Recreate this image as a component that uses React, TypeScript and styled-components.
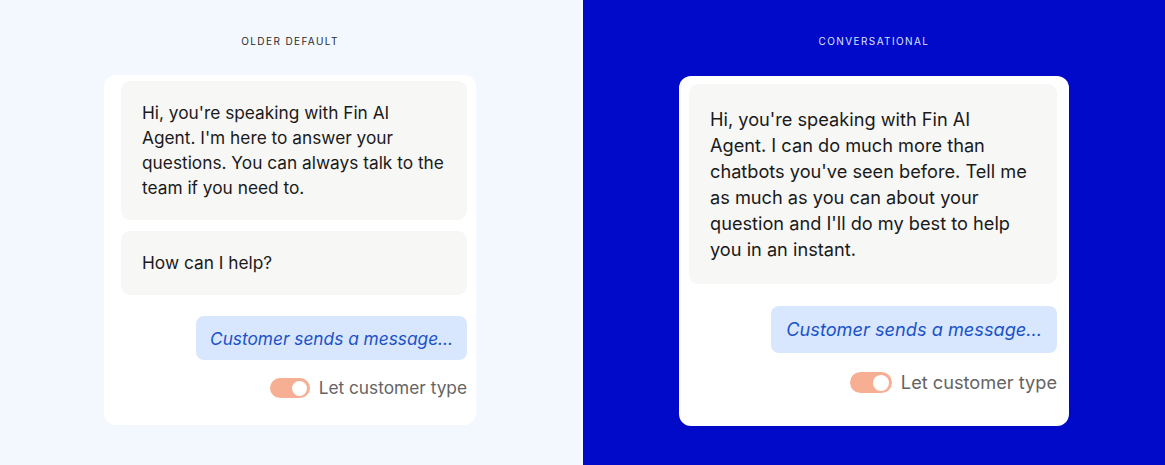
import React from 'react';
import styled, { createGlobalStyle } from 'styled-components';

const GlobalStyle = createGlobalStyle`
  html, body {
    margin: 0;
    padding: 0;
  }
  body {
    font-family: Inter, "Noto Sans", sans-serif;
    -webkit-font-smoothing: antialiased;
  }
`;

type Variant = 'light' | 'dark';

interface Sizing {
  cardWidth: number;
  cardPad: string;
  font: number;
  line: number;
  bubblePad: string;
  bubbleGap: number;
  customerPad: string;
  customerGap: number;
  toggleGap: number;
  toggleW: number;
  toggleH: number;
}

const sizes: Record<Variant, Sizing> = {
  light: {
    cardWidth: 372,
    cardPad: '6px 9px 0 17px',
    font: 17.3,
    line: 25,
    bubblePad: '19px 21px 20px',
    bubbleGap: 11,
    customerPad: '10px 14px 9px',
    customerGap: 21,
    toggleGap: 18,
    toggleW: 40,
    toggleH: 20,
  },
  dark: {
    cardWidth: 390,
    cardPad: '8px 12px 0 10px',
    font: 18.2,
    line: 26,
    bubblePad: '22px 16px 22px 21px',
    bubbleGap: 11,
    customerPad: '10px 15px 11px',
    customerGap: 22,
    toggleGap: 19,
    toggleW: 42,
    toggleH: 21,
  },
};

const Page = styled.div`
  display: grid;
  grid-template-columns: 583px 582px;
  height: 465px;
  overflow: hidden;
`;

const Panel = styled.section<{ $variant: Variant }>`
  display: flex;
  flex-direction: column;
  align-items: center;
  padding-top: 35px;
  padding-right: ${({ $variant }) => ($variant === 'dark' ? 0 : 3)}px;
  box-sizing: border-box;
  background: ${({ $variant }) => ($variant === 'dark' ? '#000ac8' : '#f3f7fe')};
`;

const PanelLabel = styled.div<{ $variant: Variant }>`
  font-size: 10px;
  line-height: 12px;
  letter-spacing: 1.4px;
  text-transform: uppercase;
  color: ${({ $variant }) => ($variant === 'dark' ? '#dfe2ff' : '#2b2b2b')};
  margin-bottom: ${({ $variant }) => ($variant === 'dark' ? 29 : 28)}px;
`;

const Card = styled.div<{ $s: Sizing }>`
  width: ${({ $s }) => $s.cardWidth}px;
  height: 350px;
  box-sizing: border-box;
  padding: ${({ $s }) => $s.cardPad};
  background: #ffffff;
  border-radius: 12px;
  display: flex;
  flex-direction: column;
  align-items: flex-end;
`;

const Thread = styled.div<{ $s: Sizing }>`
  align-self: stretch;
  display: flex;
  flex-direction: column;
  gap: ${({ $s }) => $s.bubbleGap}px;
`;

const BotBubble = styled.div<{ $s: Sizing }>`
  background: #f7f7f6;
  border-radius: 9px;
  padding: ${({ $s }) => $s.bubblePad};
  font-size: ${({ $s }) => $s.font}px;
  line-height: ${({ $s }) => $s.line}px;
  white-space: pre-line;
  color: #1a1a1a;
`;

const CustomerBubble = styled.div<{ $s: Sizing }>`
  margin-top: ${({ $s }) => $s.customerGap}px;
  background: #d8e7fd;
  border-radius: 8px;
  padding: ${({ $s }) => $s.customerPad};
  font-size: ${({ $s }) => $s.font}px;
  line-height: ${({ $s }) => $s.line}px;
  font-style: italic;
  color: #1b52c9;
`;

const ToggleRow = styled.label<{ $s: Sizing }>`
  margin-top: ${({ $s }) => $s.toggleGap}px;
  display: flex;
  align-items: center;
  gap: 9px;
  font-size: ${({ $s }) => $s.font}px;
  line-height: ${({ $s }) => $s.toggleH}px;
  color: #646464;
`;

const Switch = styled.span<{ $s: Sizing }>`
  width: ${({ $s }) => $s.toggleW}px;
  height: ${({ $s }) => $s.toggleH}px;
  border-radius: 999px;
  background: #f6af92;
  display: flex;
  align-items: center;
  justify-content: flex-end;
  padding: 0 3px;
  box-sizing: border-box;
`;

const Knob = styled.span<{ $s: Sizing }>`
  width: ${({ $s }) => $s.toggleH - 5}px;
  height: ${({ $s }) => $s.toggleH - 5}px;
  border-radius: 50%;
  background: #ffffff;
`;

interface ChatPreviewProps {
  variant: Variant;
  title: string;
  messages: string[];
}

const ChatPreview: React.FC<ChatPreviewProps> = ({ variant, title, messages }) => {
  const s = sizes[variant];
  return (
    <Panel $variant={variant}>
      <PanelLabel $variant={variant}>{title}</PanelLabel>
      <Card $s={s}>
        <Thread $s={s}>
          {messages.map((m) => (
            <BotBubble key={m} $s={s}>{m}</BotBubble>
          ))}
        </Thread>
        <CustomerBubble $s={s}>Customer sends a message...</CustomerBubble>
        <ToggleRow $s={s}>
          <Switch $s={s}>
            <Knob $s={s} />
          </Switch>
          Let customer type
        </ToggleRow>
      </Card>
    </Panel>
  );
};

export default function App() {
  return (
    <>
      <GlobalStyle />
      <Page>
        <ChatPreview
          variant="light"
          title="Older default"
          messages={[
            "Hi, you're speaking with Fin AI Agent. I'm here to answer your questions. You can always talk to the team if you need to.",
            'How can I help?',
          ]}
        />
        <ChatPreview
          variant="dark"
          title="Conversational"
          messages={[
            "Hi, you're speaking with Fin AI\nAgent. I can do much more than\nchatbots you've seen before. Tell me\nas much as you can about your\nquestion and I'll do my best to help\nyou in an instant.",
          ]}
        />
      </Page>
    </>
  );
}
